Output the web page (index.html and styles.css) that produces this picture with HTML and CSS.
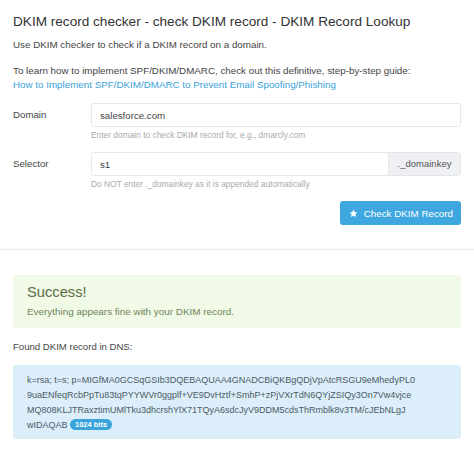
FILE: index.html
```html
<!DOCTYPE html>
<html>
<head>
<meta charset="utf-8">
<link rel="stylesheet" href="styles.css">
</head>
<body>
<div class="page">
  <h1 class="title">DKIM record checker - check DKIM record - DKIM Record Lookup</h1>
  <p class="intro">Use DKIM checker to check if a DKIM record on a domain.</p>
  <p class="guide">To learn how to implement SPF/DKIM/DMARC, check out this definitive, step-by-step guide:<br><a class="link" href="#">How to Implement SPF/DKIM/DMARC to Prevent Email Spoofing/Phishing</a></p>

  <form class="form">
    <div class="row">
      <label class="label">Domain</label>
      <div class="field">
        <div class="input-group">
          <input class="input" type="text" value="salesforce.com">
        </div>
        <div class="hint">Enter domain to check DKIM record for, e.g., dmarcly.com</div>
      </div>
    </div>
    <div class="row">
      <label class="label">Selector</label>
      <div class="field">
        <div class="input-group">
          <input class="input" type="text" value="s1">
          <span class="addon">._domainkey</span>
        </div>
        <div class="hint">Do NOT enter ._domainkey as it is appended automatically</div>
      </div>
    </div>
    <div class="actions">
      <button class="btn" type="button">
        <svg class="star" viewBox="0 0 24 24" width="9" height="9"><path fill="#fff" d="M12 1.5l3.2 6.9 7.3.8-5.4 5 1.5 7.3L12 17.8l-6.6 3.7 1.5-7.3-5.4-5 7.3-.8z"/></svg>
        Check DKIM Record
      </button>
    </div>
  </form>

  <hr class="divider">

  <div class="success">
    <div class="success-title">Success!</div>
    <div class="success-text">Everything appears fine with your DKIM record.</div>
  </div>

  <p class="found">Found DKIM record in DNS:</p>

  <div class="record">k=rsa; t=s; p=MIGfMA0GCSqGSIb3DQEBAQUAA4GNADCBiQKBgQDjVpAtcRSGU9eMhedyPL0<br>9uaENfeqRcbPpTu83tqPYYWVr0ggplf+VE9DvHztf+SmhP+zPjVXrTdN6QYjZSIQy3On7Vw4vjce<br>MQ808KLJTRaxztimUMlTku3dhcrshYlX71TQyA6sdcJyV9DDM5cdsThRmblk8v3TM/cJEbNLgJ<br>wIDAQAB <span class="badge">1024 bits</span></div>
</div>
</body>
</html>
```

FILE: styles.css
```css
* { box-sizing: border-box; }

html, body {
  margin: 0;
  padding: 0;
  background: #fff;
}

body {
  font-family: "Liberation Sans", Arial, sans-serif;
  color: #444;
}

.page {
  width: 474px;
  padding: 0 13px;
}

.title {
  margin: 12px 0 0;
  font-size: 13.6px;
  line-height: 20px;
  font-weight: normal;
  color: #333;
  white-space: nowrap;
}

.intro {
  margin: 6px 0 0;
  font-size: 9.8px;
  line-height: 14px;
}

.guide {
  margin: 12px 0 0;
  font-size: 9.8px;
  line-height: 14px;
}

.link {
  color: #3b9fd8;
  text-decoration: none;
}

.form {
  margin-top: 11px;
}

.row {
  display: flex;
  align-items: flex-start;
  margin-bottom: 11px;
}

.label {
  width: 78px;
  flex: none;
  font-size: 9.7px;
  line-height: 24px;
  color: #444;
}

.field {
  flex: 1;
}

.input-group {
  display: flex;
  height: 24px;
  border: 1px solid #e6e6e6;
  border-radius: 3px;
  overflow: hidden;
}

.input {
  flex: 1;
  min-width: 0;
  border: none;
  outline: none;
  padding: 0 8px;
  font-family: inherit;
  font-size: 9.7px;
  color: #444;
  background: #fff;
}

.addon {
  flex: none;
  width: 72px;
  background: #eef0f4;
  border-left: 1px solid #e6e6e6;
  font-size: 9.5px;
  line-height: 22px;
  text-align: center;
  color: #555;
}

.hint {
  margin-top: 2px;
  font-size: 8.4px;
  line-height: 12px;
  color: #aaa;
}

.actions {
  display: flex;
  justify-content: flex-end;
}

.btn {
  display: flex;
  align-items: center;
  gap: 6px;
  height: 24px;
  padding: 0 8px 0 9px;
  border: none;
  border-radius: 3px;
  background: #3fa7df;
  color: #fff;
  font-family: inherit;
  font-size: 9.8px;
}

.star {
  display: block;
}

.divider {
  margin: 24px -13px 0;
  border: none;
  border-top: 1px solid #ececec;
  height: 0;
}

.success {
  margin-top: 25px;
  background: #f1f9e7;
  border-radius: 3px;
  padding: 8px 14px 9px;
}

.success-title {
  font-size: 14.7px;
  line-height: 18px;
  color: #5b6e45;
}

.success-text {
  margin-top: 4px;
  font-size: 9.9px;
  line-height: 14px;
  color: #6f8559;
}

.found {
  margin: 12px 0 0;
  font-size: 9.6px;
  line-height: 14px;
  color: #444;
}

.record {
  margin-top: 11px;
  background: #dbeef9;
  border-radius: 3px;
  padding: 8px 14px 6px;
  font-size: 9px;
  line-height: 15px;
  color: #4d5b66;
  white-space: nowrap;
}

.badge {
  display: inline-block;
  background: #3aa3dc;
  color: #fff;
  font-size: 7.5px;
  font-weight: bold;
  line-height: 11px;
  padding: 0 5px;
  border-radius: 6px;
  vertical-align: 1px;
}
```
